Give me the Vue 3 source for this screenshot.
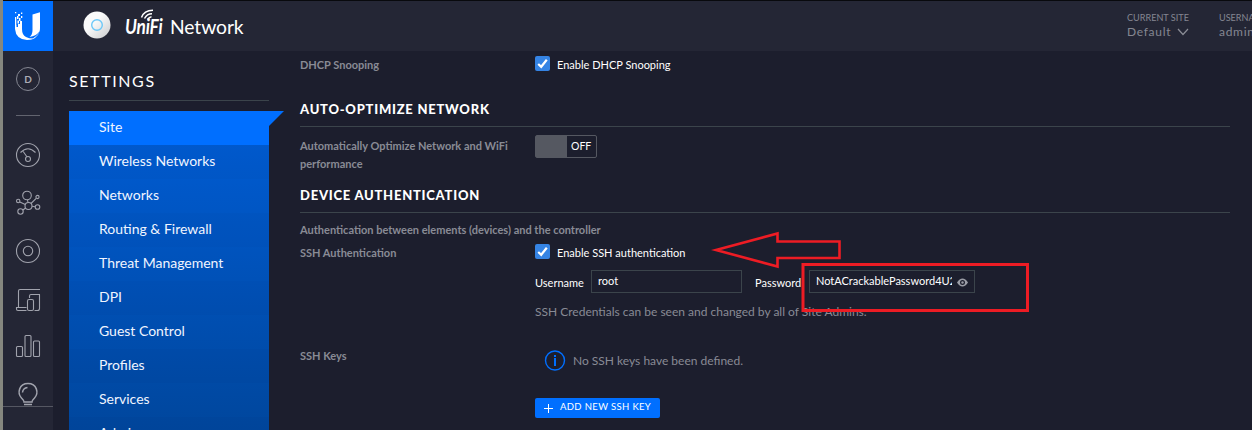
<script setup>
import { ref } from 'vue'

const menu = ['Site', 'Wireless Networks', 'Networks', 'Routing & Firewall', 'Threat Management', 'DPI', 'Guest Control', 'Profiles', 'Services', 'Admins']
const active = ref('Site')
const username = ref('root')
const password = ref('NotACrackablePassword4U2')
const snooping = ref(true)
const ssh = ref(true)
</script>

<template>
  <div class="app">
    <header class="top">
      <div class="logo">
        <svg width="50" height="50" viewBox="0 0 50 50">
          <path fill="#fff" d="M19 20v8q0 6 4 8 3 1.500 7 1.500-3 1.500-6 1.500-11-.5-12-11v-4h1.500v2H15v-3h2v-3zM29.500 13.500L37 11.200V27q0 2-.5 3.500Q33 35 26.500 36q3-2 3-7z" />
          <path fill="#fff" d="M36.300 31.500Q33.500 38 26 39q6.500-2 10.300-7.500z" />
          <path fill="#fff" d="M12 11h1.300v1.300H12zM15 13h2v2h-2zM18 11.500h1.300v1.500H18zM12 16h1.300v8H12zM14 15h1.500v3H14zM16 17h1.500v3H16zM18 15h1.300v2H18zM14.500 19.500h1.500v3h-1.500z" />
        </svg>
      </div>
      <svg class="device" width="28" height="28" viewBox="0 0 28 28">
        <defs><linearGradient id="disc" x1="0" y1="0" x2="1" y2="1"><stop offset=".4" stop-color="#fafafa" /><stop offset="1" stop-color="#c9cacc" /></linearGradient></defs>
        <circle cx="14" cy="14" r="13.500" fill="url(#disc)" />
        <circle cx="14" cy="14" r="5.300" fill="none" stroke="#6cc8f8" stroke-width="1.400" />
      </svg>
      <div class="brand">
        <span class="unifi">UniFi</span><span class="network">Network</span>
        <svg class="waves" width="16" height="12" viewBox="0 0 16 12" fill="none" stroke="#fff">
          <path stroke-width="1.500" d="M1.500 8.500C3 4 7 1.200 13 1.200M4.500 9.500c1.500-3 4-4.800 7.500-4.800M7.500 10.500c1-1.500 2-2.500 4-2.700" />
        </svg>
      </div>
      <div class="meta site"><small>CURRENT SITE</small>
        <span>Default <svg width="12" height="8" viewBox="0 0 12 8"><path d="M1 1l5 5.500L11 1" fill="none" stroke="#8b8d96" stroke-width="1.200" /></svg></span>
      </div>
      <div class="meta user"><small>USERNAME</small><span>admin</span></div>
    </header>

    <div class="body">
      <nav class="rail">
        <div class="avatar">D</div>
        <i class="sep"></i>
        <svg class="ico gauge" width="26" height="26" viewBox="0 0 26 26">
          <circle cx="13" cy="13" r="11.500" /><path d="M5.500 10.500Q13 3 20.500 10.500M8.200 9.500l3.700 5.200" /><circle cx="13" cy="17" r="2.500" />
        </svg>
        <svg class="ico topo" width="26" height="26" viewBox="0 0 26 26">
          <circle cx="12" cy="5.500" r="4.300" /><circle cx="13.500" cy="16" r="3.500" /><circle cx="3.200" cy="11" r="1.700" /><circle cx="22.500" cy="7" r="1.600" /><circle cx="22.500" cy="17" r="2.300" /><circle cx="5.500" cy="21.500" r="2.700" />
          <path d="M12.500 10l.5 2.500M4.800 12l5.500 2.500M16 13.500l5.200-5.200M17 16.300l3 .4M7.900 20l2.800-2" />
        </svg>
        <svg class="ico disc" width="26" height="26" viewBox="0 0 26 26"><circle cx="13" cy="13" r="11.500" /><circle cx="13" cy="13" r="4.700" /></svg>
        <svg class="ico clients" width="26" height="26" viewBox="0 0 26 26">
          <path d="M25 2.500H5Q3.500 2.500 3.500 4v16.500M11.500 20.500h-10v1.500q0 1.500 1.500 1.500h8.500M14.500 11V9q0-1.500 1.500-1.500h9M24.500 7.500v14q0 2-2 2h-3" /><rect x="12.500" y="12.500" width="6" height="11" rx="1.500" />
        </svg>
        <svg class="ico stats" width="26" height="26" viewBox="0 0 26 26"><rect x="1.500" y="13.500" width="6" height="10" rx="1" /><rect x="10" y="2.500" width="6" height="21" rx="1" /><rect x="18.500" y="8" width="6" height="15.500" rx="1" /></svg>
        <svg class="ico bulb" width="26" height="26" viewBox="0 0 26 26"><path stroke-width="1.500" d="M9 21c0-1.500-1-2.500-2.500-4C2 12 4 2.500 13 2.500S24 12 19.500 17C18 18.500 17 19.500 17 21zM9 23.500h8M7.500 11.500q.5-4.500 5-5" /></svg>
      </nav>

      <aside class="side">
        <h1>SETTINGS</h1>
        <ul>
          <li v-for="m in menu" :key="m" :class="{ on: m === active }" @click="active = m">{{ m }}</li>
        </ul>
      </aside>

      <main>
        <div class="row r1">
          <label class="lab">DHCP Snooping</label>
          <label class="chk"><span class="box"><svg v-if="snooping" width="15" height="15" viewBox="0 0 15 15"><path d="M3.200 8l3 2.800 5.600-7" /></svg></span>Enable DHCP Snooping</label>
        </div>
        <h2>AUTO-OPTIMIZE NETWORK</h2>
        <div class="row r2">
          <label class="lab">Automatically Optimize Network and WiFi<br>performance</label>
          <div class="toggle"><i></i><span>OFF</span></div>
        </div>
        <h2>DEVICE AUTHENTICATION</h2>
        <p class="lab note">Authentication between elements (devices) and the controller</p>
        <div class="row r3">
          <label class="lab">SSH Authentication</label>
          <div class="auth">
            <label class="chk"><span class="box"><svg v-if="ssh" width="15" height="15" viewBox="0 0 15 15"><path d="M3.200 8l3 2.800 5.600-7" /></svg></span>Enable SSH authentication</label>
            <div class="creds">
              <span class="cl u">Username</span>
              <div class="field fu"><span>{{ username }}</span></div>
              <span class="cl p">Password</span>
              <div class="field fp"><span>{{ password }}</span>
                <svg width="11" height="9" viewBox="0 0 11 9"><path fill="#9a9ca5" fill-rule="evenodd" d="M0 4.500Q2.500.5 5.500.5T11 4.500Q8.500 8.500 5.500 8.500T0 4.500zM5.500 2a2.500 2.500 0 1 0 0 5 2.500 2.500 0 0 0 0-5z" /><circle cx="5.500" cy="4.500" r="1.200" fill="#9a9ca5" /></svg>
              </div>
            </div>
            <p class="hint">SSH Credentials can be seen and changed by all of Site Admins.</p>
          </div>
        </div>
        <div class="row r4">
          <label class="lab">SSH Keys</label>
          <div>
            <div class="empty">
              <svg width="22" height="22" viewBox="0 0 22 22"><circle cx="11" cy="10.500" r="9.500" fill="none" stroke="#006fff" stroke-width="1.400" /><path d="M10 5h2v2h-2zM10 8h2v8h-2z" fill="#006fff" /></svg>
              <span>No SSH keys have been defined.</span>
            </div>
            <button><svg width="9" height="9" viewBox="0 0 9 9"><path d="M4.500 0v9M0 4.500h9" stroke="#fff" /></svg><span>ADD NEW SSH KEY</span></button>
          </div>
        </div>
      </main>
    </div>

    <svg class="marks" width="1252" height="430" viewBox="0 0 1252 430">
      <path d="M716 250l61.500-16.500V241.500h62v16.500H777.500v8.500z" stroke-width="2.600" />
      <rect x="803" y="264.500" width="224.500" height="46" stroke-width="3" />
    </svg>
  </div>
</template>

<style>
body { margin: 0; overflow: hidden; background: #1c1e2d; }
</style>

<style scoped>
* { box-sizing: border-box; }
.app { position: relative; width: 1252px; height: 430px; overflow: hidden; background: #1c1e2d; color: #fff; font-family: Lato, sans-serif; font-size: 12px; border-left: 3px solid #85877f; }
.top { display: flex; height: 51px; background: #242635; border-top: 1px solid #08090d; }
.logo { width: 50px; height: 50px; background: #006fff; flex: none; }
.device { margin: 10px 0 0 30px; flex: none; }
.brand { position: relative; margin-left: 14px; width: 1002px; flex: none; height: 50px; line-height: 50px; white-space: nowrap; display: flex; }
.unifi { font-size: 21px; font-weight: 700; font-style: italic; width: 45px; letter-spacing: -0.2px; transform: scaleX(0.82); transform-origin: 0 50%; }
.network { font-size: 19.300px; line-height: 51px; letter-spacing: -0.1px; }
.waves { position: absolute; left: 15px; top: 8px; }
.meta { color: #858792; white-space: nowrap; display: flex; flex-direction: column; flex: none; padding-top: 10px; }
.meta small { font-size: 9.100px; line-height: 14px; }
.meta span { font-size: 12px; line-height: 14px; letter-spacing: 0.7px; }
.meta.site { width: 92px; }
.meta svg { margin-left: 2px; }
.body { display: flex; height: 379px; }
.rail { width: 50px; flex: none; background: #242635; display: flex; flex-direction: column; align-items: center; height: 356px; border-bottom: 1px solid #555762; box-shadow: 0 30px 0 #242635; }
.avatar { width: 24px; height: 24px; border: 1px solid #858792; border-radius: 50%; margin-top: 16px; text-align: center; line-height: 22px; font-size: 10px; font-weight: 700; color: #abacb5; flex: none; }
.sep { width: 24px; height: 1px; background: #62646f; margin-top: 24px; flex: none; }
.ico { flex: none; fill: none; stroke: #a1a3ad; stroke-width: 1.100; }
.gauge { margin-top: 26px; }
.topo { margin-top: 22px; }
.disc { margin-top: 22px; }
.clients { margin-top: 23px; }
.stats { margin-top: 20px; }
.bulb { margin-top: 22px; }
.side { width: 200px; margin-left: 16px; flex: none; }
h1 { margin: 0 0 10px; height: 50px; border-bottom: 1px solid #3b444b; font-size: 16px; line-height: 60px; font-weight: 400; letter-spacing: 1.600px; }
ul { margin: 0; padding: 0; list-style: none; background: linear-gradient(#005dd6, #004599); height: 340px; }
li { height: 34px; line-height: 32px; padding-left: 30px; font-size: 14px; color: #f0f5ff; position: relative; white-space: nowrap; }
li:nth-child(even) { background: rgba(0, 0, 0, 0.015); }
li.on { background: #006fff; }
li.on::after { content: ''; position: absolute; left: 200px; top: 0; border-top: 15px solid #006fff; border-right: 15px solid transparent; }
main { margin-left: 31px; width: 930px; flex: none; }
.row { display: flex; }
.lab { width: 235px; flex: none; color: #898b95; font-weight: 700; font-size: 11px; line-height: 18px; white-space: nowrap; }
.chk { display: flex; font-size: 11px; line-height: 18px; height: 18px; white-space: nowrap; }
.box { width: 15px; height: 15px; border-radius: 2px; background: #3584e4; margin-right: 7px; }
.box svg { display: block; fill: none; stroke: #fff; stroke-width: 2.200; }
.r1 { padding-top: 5px; height: 49px; }
h2 { margin: 0; font-size: 13px; font-weight: 900; line-height: 18px; height: 27px; letter-spacing: 0.76px; border-bottom: 1px solid #3b444b; white-space: nowrap; }
.r2 { padding-top: 10px; height: 59px; }
.toggle { display: flex; width: 62px; height: 23px; border: 1px solid #555861; border-radius: 2px; margin-top: -2px; font-size: 10.500px; line-height: 21px; }
.toggle i { width: 31px; background: #555861; margin-right: 4px; }
.note { margin: 8px 0 0; }
.r3 { padding-top: 5px; height: 108px; }
.creds { display: flex; margin-top: 8px; height: 23px; font-size: 11px; }
.cl { line-height: 26px; white-space: nowrap; }
.u { width: 56px; }
.p { width: 54px; margin-left: 13px; }
.field { height: 23px; border: 1px solid #3b444b; padding-left: 6px; line-height: 20px; white-space: nowrap; display: flex; }
.fu { width: 151px; }
.fp { width: 166px; }
.fp span { width: 136px; overflow: hidden; }
.fp svg { margin: 7px 0 0 5px; }
.hint { margin: 10px 0 0; color: #898b95; font-size: 12px; line-height: 18px; white-space: nowrap; }
.empty { display: flex; padding: 3px 0 0 9px; color: #898b95; font-size: 12px; height: 51px; }
.empty span { line-height: 22px; margin-left: 7px; white-space: nowrap; }
button { display: flex; align-items: center; width: 125px; height: 20px; border: 0; border-radius: 2px; background: #006fff; color: #fff; padding: 0 0 0 9px; font: 400 9.500px/18px Lato, sans-serif; letter-spacing: 0.35px; white-space: nowrap; }
button svg { margin-top: 1px; }
button span { margin-left: 7px; margin-top: -2px; }
.marks { position: absolute; left: -3px; top: 0; fill: none; stroke: #ed1c24; pointer-events: none; }
</style>
